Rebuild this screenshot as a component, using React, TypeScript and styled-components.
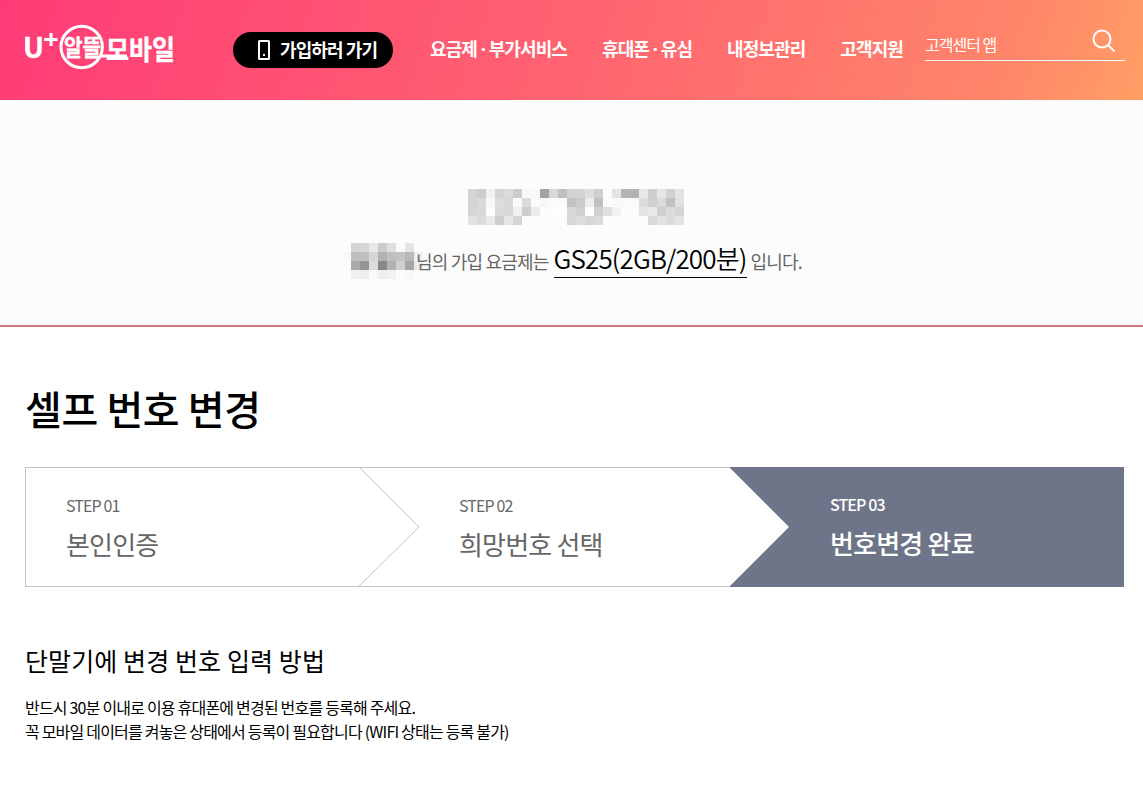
import React from "react";
import styled, { createGlobalStyle } from "styled-components";

const MENU = [["요금제", "부가서비스"], ["휴대폰", "유심"], ["내정보관리"], ["고객지원"]];

// grey levels of the masked phone number, one row per line, 0 = empty
const NUMBER_MASK = [
  [212, 204, 240, 212, 220, 204, 248, 249, 163, 216, 192, 211, 212, 222, 207, 0, 228, 180, 178, 232, 207, 229, 209, 228],
  [212, 218, 248, 220, 217, 249, 219, 0, 247, 250, 250, 195, 203, 238, 192, 0, 250, 250, 250, 220, 207, 219, 192, 224],
  [214, 216, 254, 217, 216, 240, 206, 235, 0, 0, 254, 215, 208, 254, 209, 224, 242, 0, 0, 228, 232, 207, 219, 212],
  [226, 219, 232, 206, 229, 213, 0, 0, 0, 0, 0, 215, 221, 216, 219, 0, 0, 0, 0, 0, 217, 227, 219, 228],
];

const NAME_MASK = [
  [0, 212, 214, 232, 203, 224, 250, 228, 0],
  [248, 190, 192, 215, 179, 191, 195, 186, 238],
  [0, 170, 149, 219, 136, 178, 208, 166, 235],
  [0, 241, 237, 249, 238, 242, 0, 248, 0],
];

const CELL = 9;

const Mosaic = ({ rows, className }: { rows: number[][]; className?: string }) => (
  <svg
    className={className}
    width={rows[0].length * CELL}
    height={rows.length * CELL}
    shapeRendering="crispEdges"
    aria-hidden="true"
  >
    {rows.map((row, y) =>
      row.map((level, x) =>
        level ? (
          <rect
            key={`${x}-${y}`}
            x={x * CELL}
            y={y * CELL}
            width={CELL}
            height={CELL}
            fill={`rgb(${level}, ${level}, ${level})`}
          />
        ) : null
      )
    )}
  </svg>
);

const Logo = () => (
  <LogoSvg width="150" height="50" viewBox="0 0 150 50">
    <LogoText x="-2" y="32.5" fontSize="28" textLength="21" lengthAdjust="spacingAndGlyphs">
      U
    </LogoText>
    <path d="M19 14.5h13.5M26 8v13" stroke="#fff" strokeWidth="3" />
    <circle cx="56.7" cy="22" r="20.7" fill="none" stroke="#fff" strokeWidth="3" />
    <LogoText x="39" y="30.5" fontSize="22.5" textLength="37" lengthAdjust="spacingAndGlyphs">
      알뜰
    </LogoText>
    <LogoText x="81" y="34.5" fontSize="27" textLength="69" lengthAdjust="spacingAndGlyphs">
      모바일
    </LogoText>
    <path d="M75 31h27" stroke="#fff" strokeWidth="3" />
  </LogoSvg>
);

const App = () => (
  <>
    <GlobalStyle />
    <Header>
      <Logo />
      <JoinButton>
        <svg width="12" height="20" viewBox="0 0 12 20">
          <rect x="1" y="1" width="10" height="18" rx="0.5" fill="none" stroke="#fff" strokeWidth="2" />
          <rect x="5" y="14" width="2" height="2" fill="#fff" />
        </svg>
        <span>가입하러 가기</span>
      </JoinButton>
      <Menu>
        {MENU.map(([first, second]) => (
          <MenuItem key={first}>
            {first}
            {second && (
              <>
                <Dot> · </Dot>
                {second}
              </>
            )}
          </MenuItem>
        ))}
      </Menu>
      <Search>
        <span>고객센터 앱</span>
        <svg width="24" height="24" viewBox="0 0 24 24" fill="none" stroke="#fff" strokeWidth="2">
          <circle cx="10" cy="10" r="8.5" />
          <path d="M16 16l6.5 6.5" />
        </svg>
      </Search>
    </Header>
    <Summary>
      <NumberMosaic rows={NUMBER_MASK} />
      <PlanLine>
        <NameMosaic rows={NAME_MASK} />
        <span>님의 가입 요금제는</span>
        <Plan>GS25(2GB/200분)</Plan>
        <span>입니다.</span>
      </PlanLine>
    </Summary>
    <Page>
      <Title>셀프 번호 변경</Title>
      <Steps>
        <Step>
          <StepLabel>
            <small>STEP 01</small>
            <strong>본인인증</strong>
          </StepLabel>
        </Step>
        <Step>
          <Arrow width="60" height="118" viewBox="0 0 60 118">
            <path d="M1 0L60 59L0 118" fill="none" stroke="#c3c3c3" />
          </Arrow>
          <StepLabel>
            <small>STEP 02</small>
            <strong>희망번호 선택</strong>
          </StepLabel>
        </Step>
        <Step $active>
          <Arrow width="60" height="120" viewBox="0 0 60 120">
            <path d="M0 0L60 60L0 120Z" fill="#fff" />
          </Arrow>
          <StepLabel $active>
            <small>STEP 03</small>
            <strong>번호변경 완료</strong>
          </StepLabel>
        </Step>
      </Steps>
      <SubTitle>단말기에 변경 번호 입력 방법</SubTitle>
      <Text>
        반드시 30분 이내로 이용 휴대폰에 변경된 번호를 등록해 주세요.
        <br />
        꼭 모바일 데이터를 켜놓은 상태에서 등록이 필요합니다 (WIFI 상태는 등록 불가)
      </Text>
    </Page>
  </>
);

const GlobalStyle = createGlobalStyle`
  * {
    box-sizing: border-box;
  }
  body {
    margin: 0;
    background: #fff;
    color: #000;
    font-family: "Noto Sans CJK KR", "Noto Sans", sans-serif;
    font-size: 16px;
    letter-spacing: -0.8px;
    white-space: nowrap;
    overflow: hidden;
  }
`;

const NumberMosaic = styled(Mosaic)`
  display: block;
  flex: none;
  margin-left: 9px;
`;

const NameMosaic = styled(Mosaic)`
  display: block;
  flex: none;
  margin: 0 -7px 0 1px;
`;

const Header = styled.header`
  display: flex;
  align-items: flex-start;
  height: 100px;
  padding: 0 18px 0 25px;
  background: linear-gradient(110deg, #ff3b77 0%, #ff6370 50%, #ff856a 87%, #ff9f65 100%);
  color: #fff;
`;

const LogoSvg = styled.svg`
  flex: none;
  margin-top: 25px;
  overflow: visible;
`;

const LogoText = styled.text`
  fill: #fff;
  stroke: #fff;
  stroke-width: 0.4px;
  font-weight: 700;
  letter-spacing: 0;
`;

const JoinButton = styled.a`
  display: flex;
  flex: none;
  gap: 10px;
  width: 160px;
  height: 36px;
  margin: 32px 0 0 58px;
  padding: 8px 0 0 25px;
  border-radius: 18px;
  background: #000;
  font-size: 18px;
  font-weight: 700;
  letter-spacing: -0.9px;
  line-height: 19px;
`;

const Menu = styled.nav`
  display: flex;
  gap: 35px;
  margin: 35px 0 0 37px;
`;

const MenuItem = styled.a`
  font-size: 18px;
  font-weight: 700;
  letter-spacing: -0.9px;
  line-height: 26px;
`;

const Dot = styled.span`
  font-family: "Noto Sans", sans-serif;
`;

const Search = styled.div`
  display: flex;
  flex: none;
  justify-content: space-between;
  width: 200px;
  height: 32px;
  margin: 29px 0 0 auto;
  padding-right: 9px;
  border-bottom: 1px solid #fff;
  letter-spacing: -1px;
  line-height: 30px;
`;

const Summary = styled.section`
  display: flex;
  flex-direction: column;
  align-items: center;
  height: 227px;
  padding-top: 89px;
  border-bottom: 2px solid #ce7782;
  background: #fcfcfc;
`;

const PlanLine = styled.p`
  display: flex;
  align-items: flex-start;
  margin: 18px 0 0;
  color: #666;
  font-size: 18px;
  line-height: 36px;
`;

const Plan = styled.b`
  height: 35px;
  margin: 0 4px 0 5px;
  border-bottom: 1px solid #000;
  color: #000;
  font-size: 26px;
  font-weight: 350;
  letter-spacing: -0.85px;
  line-height: 30px;
`;

const Page = styled.main`
  padding: 50px 19px 0 25px;
`;

const Title = styled.h1`
  margin: 0;
  font-size: 40px;
  font-weight: 500;
  letter-spacing: -0.4px;
  line-height: 62px;
`;

const Steps = styled.ol`
  display: grid;
  grid-template-columns: 334px 370px 1fr;
  height: 120px;
  margin: 28px 0 0;
  padding: 0;
  list-style: none;
`;

const StepLabel = styled.div<{ $active?: boolean }>`
  display: flex;
  flex-direction: column;
  padding: 23px 0 0 ${({ $active }) => ($active ? 41 : 40)}px;

  small {
    font-size: 16px;
    letter-spacing: -0.9px;
    line-height: 28px;
  }
  strong {
    margin-top: 5px;
    font-size: 26px;
    font-weight: inherit;
    line-height: 40px;
  }
`;

const Step = styled.li<{ $active?: boolean }>`
  display: flex;
  border: solid #c3c3c3;
  border-width: ${({ $active }) => ($active ? 0 : "1px 0")};
  background: ${({ $active }) => ($active ? "#6e7588" : "#fff")};
  color: ${({ $active }) => ($active ? "#fff" : "#666")};
  font-weight: ${({ $active }) => ($active ? 500 : 400)};

  &:first-child {
    border-left-width: 1px;
  }
`;

const Arrow = styled.svg`
  display: block;
  flex: none;
  overflow: visible;
`;

const SubTitle = styled.h2`
  margin: 53px 0 0;
  font-size: 25px;
  font-weight: 400;
  letter-spacing: 0.1px;
  line-height: 40px;
`;

const Text = styled.p`
  margin: 15px 0 0;
  line-height: 24px;
`;

export default App;
